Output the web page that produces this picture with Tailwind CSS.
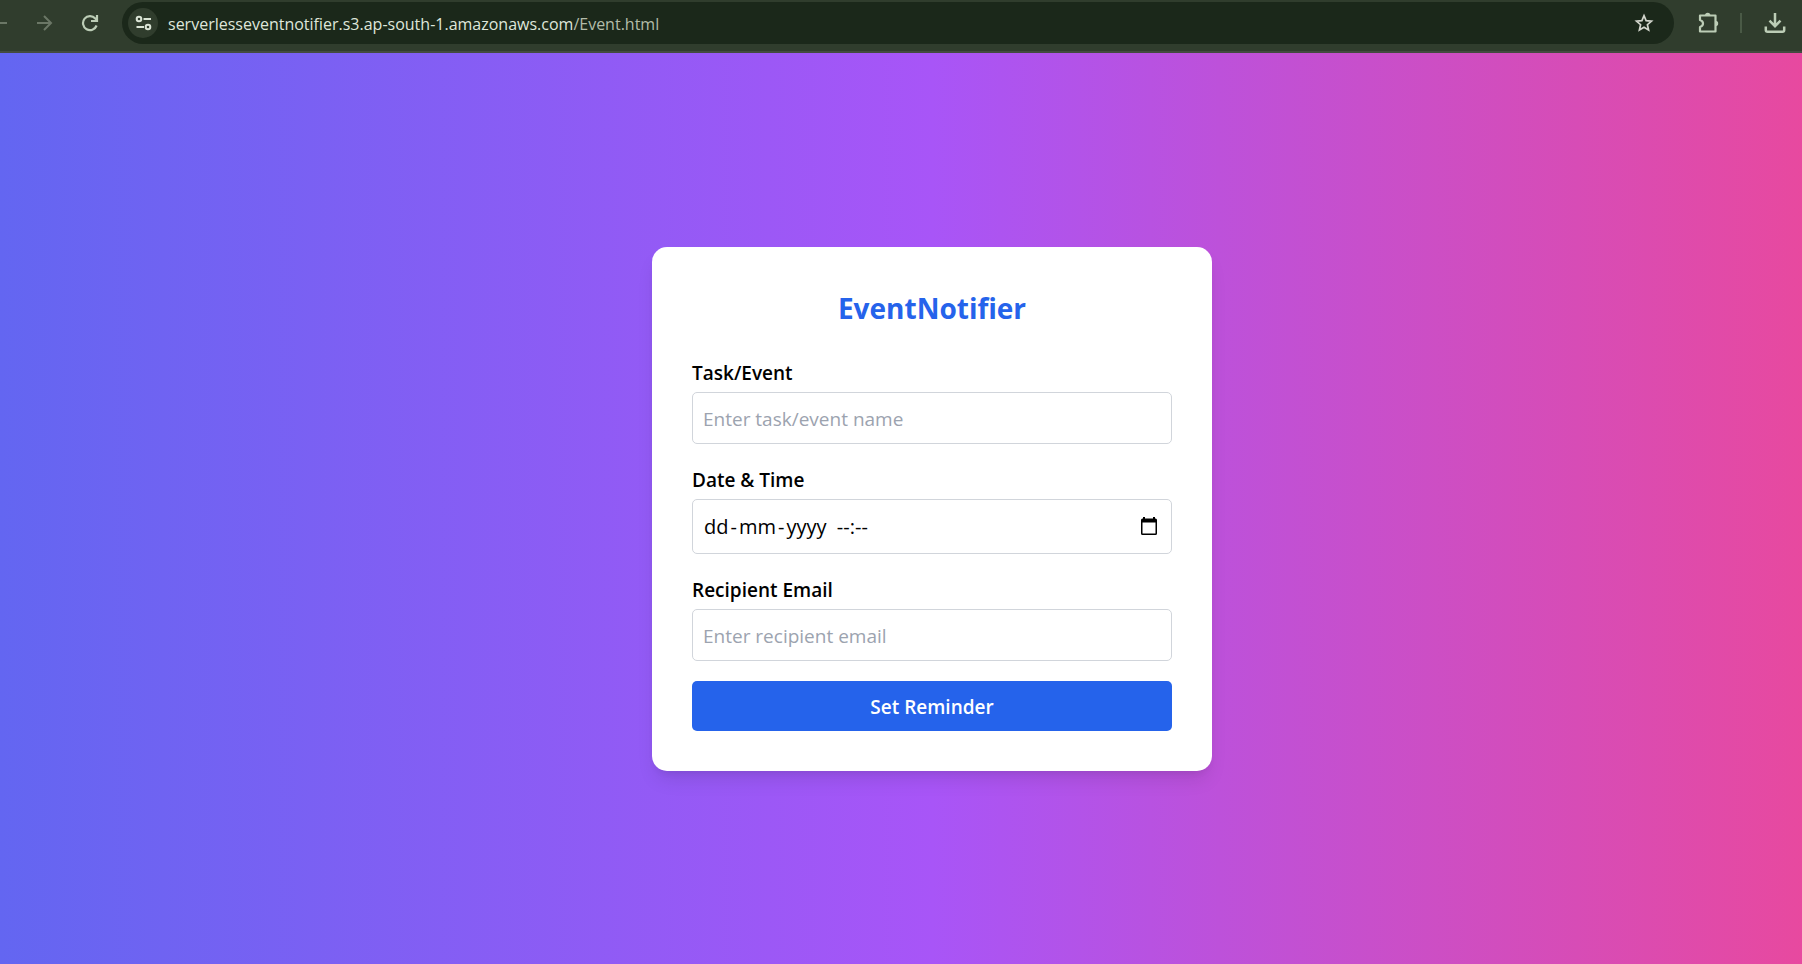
<!DOCTYPE html>
<html lang="en">
<head>
<meta charset="utf-8">
<title>EventNotifier</title>
<script src="https://cdn.jsdelivr.net/npm/@tailwindcss/browser@4"></script>
</head>
<body class="flex min-h-screen flex-col overflow-x-hidden font-['Segoe_UI','Open_Sans','Noto_Sans',sans-serif] text-black">
  <header class="flex h-[53px] items-start overflow-hidden border-b-2 border-[#434b40] bg-[#303d2d] pt-0.5">
    <nav class="flex h-[42px] shrink-0 items-center" aria-label="Browser">
      <button type="button" aria-label="Back" class="-ml-2.5 w-[18px]">
        <svg class="size-[18px]" viewBox="0 0 18 18" fill="none" stroke="#6b7766" stroke-width="2"><path d="M17 9H2.500M9 2L2 9l7 7"/></svg>
      </button>
      <button type="button" aria-label="Forward" class="ml-7">
        <svg class="size-[18px]" viewBox="0 0 18 18" fill="none" stroke="#6b7766" stroke-width="2"><path d="M1 9h14.500M8 2l7 7-7 7"/></svg>
      </button>
      <button type="button" aria-label="Reload" class="ml-[27px]">
        <svg class="size-[18px]" viewBox="0 0 18 18" fill="none" stroke="#bccdb6" stroke-width="2.200"><path d="M15.600 11.500A7 7 0 1 1 14.300 4.500L16 6.200"/><path d="M16 1v6h-6"/></svg>
      </button>
    </nav>
    <div class="ml-[23px] flex h-[42px] min-w-0 flex-1 items-center rounded-full bg-[#1b281a] pl-1.5 pr-5">
      <button type="button" aria-label="Site information" class="flex size-[30px] shrink-0 items-center justify-center rounded-full bg-[#303d2d]">
        <svg class="h-4 w-[17px]" viewBox="0 0 17 16" fill="none" stroke="#dbe5d6" stroke-width="2"><circle cx="4" cy="4" r="2.300"/><path d="M8.500 4H16M1.500 12H9"/><circle cx="13" cy="12" r="2.300"/></svg>
      </button>
      <p class="min-w-0 flex-1 truncate pt-0.5 pl-2.5 text-base text-[#dfe6da]">serverlesseventnotifier.s3.ap-south-1.amazonaws.com<span class="text-[#b3bca9]">/Event.html</span></p>
      <button type="button" aria-label="Bookmark this page">
        <svg class="size-5" viewBox="0 0 20 20" fill="none" stroke="#d3d6cd" stroke-width="1.700"><path d="M10 2.600l2.100 5 5.400.500-4.100 3.600 1.200 5.300L10 14.200 5.400 17l1.200-5.300L2.500 8.100l5.400-.500z"/></svg>
      </button>
    </div>
    <div class="flex h-[42px] shrink-0 items-center pl-6">
      <button type="button" aria-label="Extensions">
        <svg class="size-[22px]" viewBox="0 0 22 22"><path d="M2 3.500H17.500V19.500H2V15Q5 14 5 11.500Q5 9 2 8Z" fill="none" stroke="#bccdb6" stroke-width="2.200" stroke-linejoin="round"/><path d="M7 3.500a2.700 2.700 0 0 1 5.400 0zM17.500 8.800a2.700 2.700 0 0 1 0 5.400z" fill="#bccdb6"/></svg>
      </button>
      <span class="ml-5 h-5 w-0.5 bg-[#4a5a46]"></span>
      <button type="button" aria-label="Downloads" class="ml-[22px] mr-4">
        <svg class="size-[22px]" viewBox="0 0 22 22" fill="none" stroke="#bccdb6" stroke-width="2.500"><path d="M11 1v13M5.500 8.700L11 14.200l5.500-5.500M1.800 14.500V18a1.800 1.800 0 0 0 1.800 1.800h14.800a1.800 1.800 0 0 0 1.800-1.800v-3.500"/></svg>
      </button>
    </div>
  </header>

  <!-- The page body runs past the right edge of the window -->
  <main class="-mr-[62px] flex flex-1 items-center justify-center bg-linear-to-r/srgb from-[#6366f1] via-[#a855f7] to-[#ec4899]">
    <form class="w-full max-w-[560px] rounded-[15px] bg-white p-10 shadow-[0_12px_19px_-4px_rgba(0,0,0,0.1),0_5px_8px_-5px_rgba(0,0,0,0.1)]">
      <h1 class="mb-7 text-center text-[28px] leading-[42px] font-bold text-[#2563eb]">EventNotifier</h1>

      <div class="mb-5">
        <label for="task" class="mb-[3px] block text-[19px] leading-8 font-semibold">Task/Event</label>
        <input id="task" type="text" placeholder="Enter task/event name" class="block h-[52px] w-full rounded-[5px] border border-[#d1d5db] px-2.5 pt-0.5 text-[19px] placeholder:text-[#9ca3af]">
      </div>

      <div class="mb-5">
        <label for="when" class="mb-[3px] block text-[19px] leading-8 font-semibold">Date &amp; Time</label>
        <div class="flex h-[55px] items-center rounded-[5px] border border-[#d1d5db] pl-[11px] pr-3">
          <input id="when" type="text" placeholder="dd&#8202;-&#8202;mm&#8202;-&#8202;yyyy &nbsp;--:--" class="min-w-0 flex-1 pt-0.5 text-[20px] outline-none placeholder:text-black">
          <button type="button" aria-label="Open calendar">
            <svg class="size-5" viewBox="0 0 20 20"><path d="M2 4A1.500 1.500 0 0 1 3.500 2.500H4V1h2v1.500h8V1h2v1.500h.500A1.500 1.500 0 0 1 18 4v13.500a1.500 1.500 0 0 1-1.500 1.500h-13A1.500 1.500 0 0 1 2 17.500zM3.500 6.500v11h13v-11z" fill="#000" fill-rule="evenodd"/></svg>
          </button>
        </div>
      </div>

      <div class="mb-5">
        <label for="email" class="mb-[3px] block text-[19px] leading-8 font-semibold">Recipient Email</label>
        <input id="email" type="email" placeholder="Enter recipient email" class="block h-[52px] w-full rounded-[5px] border border-[#d1d5db] px-2.5 pt-0.5 text-[19px] placeholder:text-[#9ca3af]">
      </div>

      <button type="submit" class="block h-[50px] w-full rounded-[5px] bg-[#2563eb] pt-0.5 text-[19px] leading-[30px] font-semibold text-white">Set Reminder</button>
    </form>
  </main>
</body>
</html>
